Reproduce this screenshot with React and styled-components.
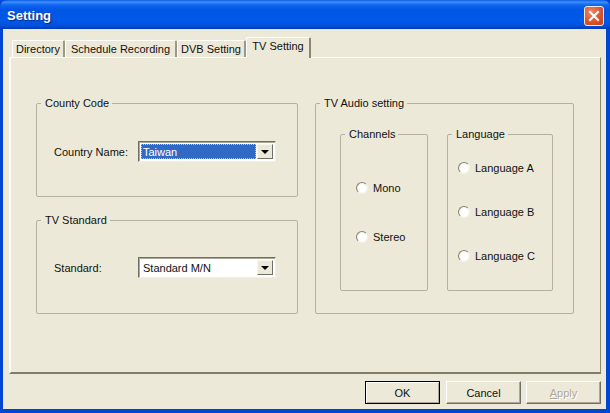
import React from 'react';
import styled, { createGlobalStyle } from 'styled-components';

const GlobalStyle = createGlobalStyle`
	html, body {
		margin: 0;
		padding: 0;
		background: #0046d5;
	}
	* {
		box-sizing: border-box;
	}
`;

const Window = styled.div`
	width: 610px;
	height: 413px;
	display: flex;
	flex-direction: column;
	font-family: 'Liberation Sans', Arial, sans-serif;
	font-size: 11px;
	color: #111;
	background: #0046d5;
	border-radius: 7px 7px 0 0;
	overflow: hidden;
`;
const TitleBar = styled.div`
	height: 29px;
	flex: none;
	display: flex;
	align-items: center;
	justify-content: space-between;
	padding: 2px 6px 0 7px;
	background: linear-gradient(
		180deg,
		#0a5be0 0,
		#3f8fff 2px,
		#0f66ee 5px,
		#0056e4 10px,
		#0059ea 20px,
		#0050dc 26px,
		#0038b0 29px
	);
`;
const Title = styled.span`
	font-size: 13px;
	font-weight: bold;
	color: #fff;
	text-shadow: 1px 1px 1px #0a2a8a;
`;
const CloseButton = styled.div`
	width: 20px;
	height: 20px;
	display: flex;
	align-items: center;
	justify-content: center;
	border: 1px solid #f4ece8;
	border-radius: 3px;
	background: radial-gradient(circle at 35% 30%, #e88a6c, #d9512b 60%, #c23d1c);
`;
const Client = styled.div`
	flex: 1;
	display: flex;
	flex-direction: column;
	margin: 0 4px 4px 3px;
	padding: 7px 5px 0 6px;
	background: #ece9d8;
`;
const TabStrip = styled.div`
	height: 21px;
	flex: none;
	display: flex;
	align-items: flex-end;
	padding-left: 3px;
	position: relative;
	z-index: 1;
`;
const Tab = styled.div`
	height: ${p => (p.$active ? '21px' : '17px')};
	width: ${p => p.$width}px;
	margin-bottom: ${p => (p.$active ? '-1px' : '0')};
	display: flex;
	align-items: center;
	justify-content: center;
	padding-bottom: ${p => (p.$active ? '4px' : '0')};
	background: #ece9d8;
	border-top: 1px solid #fff;
	border-left: 1px solid #fff;
	border-right: 2px solid ${p => (p.$active ? '#8a8874' : '#9b9985')};
	border-radius: 2px 2px 0 0;
	white-space: nowrap;
`;
const TabPanel = styled.div`
	height: 317px;
	flex: none;
	padding: 38px 25px 0 25px;
	border-top: 1px solid #fff;
	border-left: 2px solid #fbfaf5;
	border-right: 1px solid #8a8874;
	border-bottom: 2px solid #7f7d68;
`;
const Columns = styled.div`
	display: grid;
	grid-template-columns: 262px 259px;
	column-gap: 17px;
`;
const Stack = styled.div`
	display: flex;
	flex-direction: column;
	gap: 16px;
`;
const Group = styled.fieldset`
	margin: 0;
	padding: 0;
	min-width: 0;
	height: ${p => p.$height}px;
	border: 1px solid #b3b1a0;
	border-radius: 2px;
`;
const Legend = styled.legend`
	margin-left: 4px;
	padding: 0 3px 0 4px;
	line-height: 14px;
`;
const FormRow = styled.div`
	display: flex;
	align-items: center;
	padding: ${p => p.$top}px 0 0 17px;
`;
const FormLabel = styled.span`
	width: 84px;
	flex: none;
`;
const Combo = styled.div`
	width: 138px;
	height: 21px;
	display: flex;
	padding: 2px;
	background: #fff;
	border-top: 1px solid #716f64;
	border-left: 1px solid #716f64;
	border-right: 1px solid #f1efe2;
	border-bottom: 1px solid #f1efe2;
	box-shadow: inset 1px 1px 0 #aca899;
`;
const ComboValue = styled.div`
	flex: 1;
	display: flex;
	align-items: center;
	padding-left: 2px;
	margin-right: 1px;
	color: ${p => (p.$selected ? '#fff' : '#111')};
	background: ${p => (p.$selected ? '#316ac5' : '#fff')};
	outline: ${p => (p.$selected ? '1px dotted #d9c77a' : 'none')};
	outline-offset: -1px;
`;
const ComboButton = styled.div`
	width: 16px;
	flex: none;
	display: flex;
	align-items: center;
	justify-content: center;
	background: #ece9d8;
	border-top: 1px solid #f6f5ee;
	border-left: 1px solid #f6f5ee;
	border-right: 1px solid #716f64;
	border-bottom: 1px solid #716f64;
	&::after {
		content: '';
		border-top: 4px solid #000;
		border-left: 4px solid transparent;
		border-right: 4px solid transparent;
	}
`;
const AudioColumns = styled.div`
	display: grid;
	grid-template-columns: 88px 106px;
	column-gap: 19px;
	padding: 17px 0 0 24px;
`;
const RadioList = styled.div`
	display: flex;
	flex-direction: column;
	gap: ${p => p.$gap}px;
	padding: ${p => p.$top}px 0 0 ${p => p.$left}px;
`;
const RadioRow = styled.div`
	height: 16px;
	display: flex;
	align-items: center;
	gap: 5px;
`;
const RadioDot = styled.span`
	width: 12px;
	height: 12px;
	flex: none;
	border-radius: 50%;
	border-top: 1px solid #87856f;
	border-left: 1px solid #87856f;
	border-right: 1px solid #f5f3e8;
	border-bottom: 1px solid #f5f3e8;
	background: radial-gradient(circle at 55% 55%, #fff 45%, #e8e6d8 100%);
`;
const ButtonRow = styled.div`
	display: flex;
	justify-content: flex-end;
	gap: 5px;
	padding-top: 7px;
`;
const DialogButton = styled.div`
	width: 75px;
	height: 23px;
	display: flex;
	align-items: center;
	justify-content: center;
	background: #ece9d8;
	margin-right: ${p => (p.$primary ? '1px' : '0')};
	color: ${p => (p.$disabled ? '#aca899' : '#111')};
	text-shadow: ${p => (p.$disabled ? '1px 1px 0 #fff' : 'none')};
	border: 1px solid;
	border-color: ${p => (p.$primary ? '#000' : '#fff #716f64 #716f64 #fff')};
	box-shadow: ${p => (p.$primary
		? 'inset 1px 1px 0 #fff, inset -1px -1px 0 #aca899'
		: 'inset -1px -1px 0 #aca899')};
`;

const tabs = [
	{ label: 'Directory', width: 53 },
	{ label: 'Schedule Recording', width: 112 },
	{ label: 'DVB Setting', width: 69 },
	{ label: 'TV Setting', width: 65, active: true }
];

const RadioGroup = ({ items, gap, top, left }) => (
	<RadioList $gap={gap} $top={top} $left={left}>
		{items.map(item => (
			<RadioRow key={item}>
				<RadioDot />
				{item}
			</RadioRow>
		))}
	</RadioList>
);

const App = () => (
	<Window>
		<GlobalStyle />
		<TitleBar>
			<Title>Setting</Title>
			<CloseButton>
				<svg width="12" height="12" viewBox="0 0 12 12">
					<path d="M2 2 L10 10 M10 2 L2 10" stroke="#fff" strokeWidth="2" strokeLinecap="square" />
				</svg>
			</CloseButton>
		</TitleBar>
		<Client>
			<TabStrip>
				{tabs.map(tab => (
					<Tab key={tab.label} $width={tab.width} $active={tab.active}>
						{tab.label}
					</Tab>
				))}
			</TabStrip>
			<TabPanel>
				<Columns>
					<Stack>
						<Group $height={101}>
							<Legend>County Code</Legend>
							<FormRow $top={31}>
								<FormLabel>Country Name:</FormLabel>
								<Combo>
									<ComboValue $selected>Taiwan</ComboValue>
									<ComboButton />
								</Combo>
							</FormRow>
						</Group>
						<Group $height={101}>
							<Legend>TV Standard</Legend>
							<FormRow $top={30}>
								<FormLabel>Standard:</FormLabel>
								<Combo>
									<ComboValue>Standard M/N</ComboValue>
									<ComboButton />
								</Combo>
							</FormRow>
						</Group>
					</Stack>
					<Group $height={218}>
						<Legend>TV Audio setting</Legend>
						<AudioColumns>
							<Group $height={164}>
								<Legend>Channels</Legend>
								<RadioGroup items={['Mono', 'Stereo']} gap={33} top={39} left={15} />
							</Group>
							<Group $height={164}>
								<Legend>Language</Legend>
								<RadioGroup items={['Language A', 'Language B', 'Language C']} gap={28} top={19} left={10} />
							</Group>
						</AudioColumns>
					</Group>
				</Columns>
			</TabPanel>
			<ButtonRow>
				<DialogButton $primary>OK</DialogButton>
				<DialogButton>Cancel</DialogButton>
				<DialogButton $disabled><span><u>A</u>pply</span></DialogButton>
			</ButtonRow>
		</Client>
	</Window>
);

export default App;
